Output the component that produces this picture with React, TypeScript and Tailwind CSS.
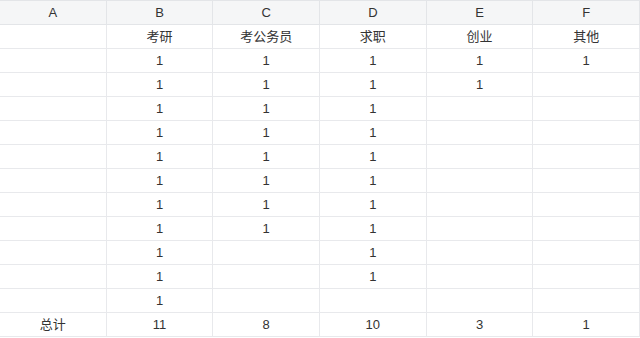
const cols = ["A", "B", "C", "D", "E", "F"]

const rows: string[][] = [
  ["", "考研", "考公务员", "求职", "创业", "其他"],
  ["", "1", "1", "1", "1", "1"],
  ["", "1", "1", "1", "1", ""],
  ["", "1", "1", "1", "", ""],
  ["", "1", "1", "1", "", ""],
  ["", "1", "1", "1", "", ""],
  ["", "1", "1", "1", "", ""],
  ["", "1", "1", "1", "", ""],
  ["", "1", "1", "1", "", ""],
  ["", "1", "", "1", "", ""],
  ["", "1", "", "1", "", ""],
  ["", "1", "", "", "", ""],
  ["总计", "11", "8", "10", "3", "1"],
]

export default function App() {
  return (
    <div
      className="w-[640px] h-[338px] overflow-hidden bg-white text-[13px] text-[#333]"
      style={{ fontFamily: '"Liberation Sans", Arial, "Noto Sans CJK SC", sans-serif' }}
    >
      <div className="grid grid-cols-6 border-t border-[#e3e5e8]">
        {cols.map((c) => (
          <div
            key={c}
            className="h-[24px] flex items-center justify-center bg-[#f5f6f7] border-r border-b border-[#e3e5e8]"
          >
            {c}
          </div>
        ))}
        {rows.map((r, i) =>
          r.map((v, j) => (
            <div
              key={i + "-" + j}
              className="h-[24px] flex items-center justify-center border-r border-b border-[#e8e9ec]"
            >
              {v}
            </div>
          ))
        )}
      </div>
    </div>
  )
}
